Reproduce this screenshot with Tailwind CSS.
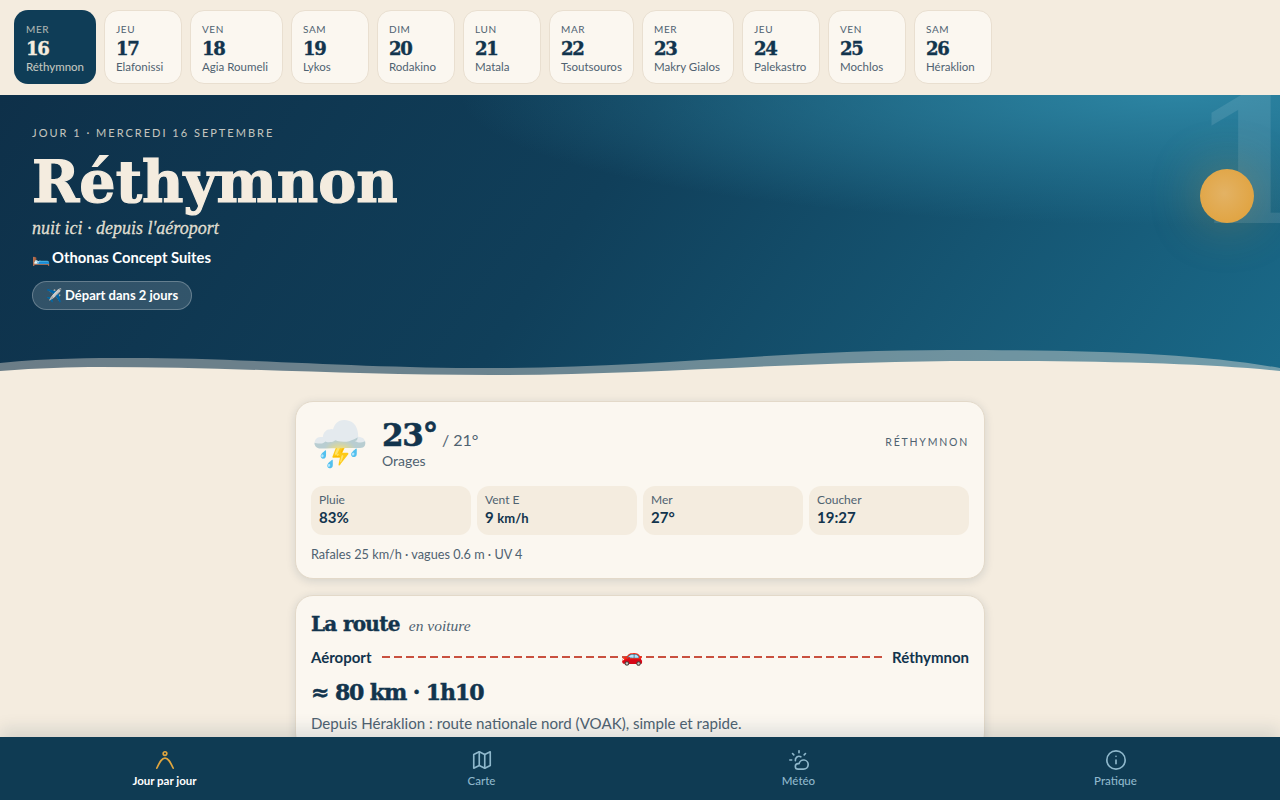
<!DOCTYPE html>
<html lang="fr">
<head>
  <meta charset="UTF-8" />
  <title>Crète | Jour par jour</title>
  <script src="https://cdn.jsdelivr.net/npm/@tailwindcss/browser@4"></script>
</head>
<body class="h-[800px] w-[1280px] overflow-hidden relative bg-[#f4ecdf] text-[#12344d] font-['Lato',sans-serif]">

  <!-- Day strip -->
  <nav class="h-[95px] px-[14px] pt-[10px] flex gap-2 items-start">
    <a class="w-[82px] h-[74px] rounded-[14px] bg-[#0f3d57] text-[#f4ecdf] pl-3 pt-[13px] flex flex-col">
      <span class="text-[10px] leading-[12px] tracking-[0.06em] opacity-70">MER</span>
      <span class="mt-[2px] font-['DejaVu_Serif',serif] font-bold text-[18px] tracking-[-0.07em] [-webkit-text-stroke:0.4px] leading-[24px]">16</span>
      <span class="mt-[-1px] text-[11.5px] leading-[14px] opacity-80">Réthymnon</span>
    </a>
    <a class="w-[78px] h-[74px] rounded-[14px] bg-[#fbf7f0] border border-[#e9dfd0] pl-[11px] pt-[12px] flex flex-col">
      <span class="text-[10px] leading-[12px] tracking-[0.06em] text-[#4f6270]">JEU</span>
      <span class="mt-[2px] font-['DejaVu_Serif',serif] font-bold text-[18px] tracking-[-0.07em] [-webkit-text-stroke:0.4px] leading-[24px]">17</span>
      <span class="mt-[-1px] text-[11.5px] leading-[14px] text-[#4f6270]">Elafonissi</span>
    </a>
    <a class="w-[93px] h-[74px] rounded-[14px] bg-[#fbf7f0] border border-[#e9dfd0] pl-[11px] pt-[12px] flex flex-col">
      <span class="text-[10px] leading-[12px] tracking-[0.06em] text-[#4f6270]">VEN</span>
      <span class="mt-[2px] font-['DejaVu_Serif',serif] font-bold text-[18px] tracking-[-0.07em] [-webkit-text-stroke:0.4px] leading-[24px]">18</span>
      <span class="mt-[-1px] text-[11.5px] leading-[14px] text-[#4f6270]">Agia Roumeli</span>
    </a>
    <a class="w-[78px] h-[74px] rounded-[14px] bg-[#fbf7f0] border border-[#e9dfd0] pl-[11px] pt-[12px] flex flex-col">
      <span class="text-[10px] leading-[12px] tracking-[0.06em] text-[#4f6270]">SAM</span>
      <span class="mt-[2px] font-['DejaVu_Serif',serif] font-bold text-[18px] tracking-[-0.07em] [-webkit-text-stroke:0.4px] leading-[24px]">19</span>
      <span class="mt-[-1px] text-[11.5px] leading-[14px] text-[#4f6270]">Lykos</span>
    </a>
    <a class="w-[78px] h-[74px] rounded-[14px] bg-[#fbf7f0] border border-[#e9dfd0] pl-[11px] pt-[12px] flex flex-col">
      <span class="text-[10px] leading-[12px] tracking-[0.06em] text-[#4f6270]">DIM</span>
      <span class="mt-[2px] font-['DejaVu_Serif',serif] font-bold text-[18px] tracking-[-0.07em] [-webkit-text-stroke:0.4px] leading-[24px]">20</span>
      <span class="mt-[-1px] text-[11.5px] leading-[14px] text-[#4f6270]">Rodakino</span>
    </a>
    <a class="w-[78px] h-[74px] rounded-[14px] bg-[#fbf7f0] border border-[#e9dfd0] pl-[11px] pt-[12px] flex flex-col">
      <span class="text-[10px] leading-[12px] tracking-[0.06em] text-[#4f6270]">LUN</span>
      <span class="mt-[2px] font-['DejaVu_Serif',serif] font-bold text-[18px] tracking-[-0.07em] [-webkit-text-stroke:0.4px] leading-[24px]">21</span>
      <span class="mt-[-1px] text-[11.5px] leading-[14px] text-[#4f6270]">Matala</span>
    </a>
    <a class="w-[85px] h-[74px] rounded-[14px] bg-[#fbf7f0] border border-[#e9dfd0] pl-[11px] pt-[12px] flex flex-col">
      <span class="text-[10px] leading-[12px] tracking-[0.06em] text-[#4f6270]">MAR</span>
      <span class="mt-[2px] font-['DejaVu_Serif',serif] font-bold text-[18px] tracking-[-0.07em] [-webkit-text-stroke:0.4px] leading-[24px]">22</span>
      <span class="mt-[-1px] text-[11.5px] leading-[14px] text-[#4f6270]">Tsoutsouros</span>
    </a>
    <a class="w-[92px] h-[74px] rounded-[14px] bg-[#fbf7f0] border border-[#e9dfd0] pl-[11px] pt-[12px] flex flex-col">
      <span class="text-[10px] leading-[12px] tracking-[0.06em] text-[#4f6270]">MER</span>
      <span class="mt-[2px] font-['DejaVu_Serif',serif] font-bold text-[18px] tracking-[-0.07em] [-webkit-text-stroke:0.4px] leading-[24px]">23</span>
      <span class="mt-[-1px] text-[11.5px] leading-[14px] text-[#4f6270]">Makry Gialos</span>
    </a>
    <a class="w-[78px] h-[74px] rounded-[14px] bg-[#fbf7f0] border border-[#e9dfd0] pl-[11px] pt-[12px] flex flex-col">
      <span class="text-[10px] leading-[12px] tracking-[0.06em] text-[#4f6270]">JEU</span>
      <span class="mt-[2px] font-['DejaVu_Serif',serif] font-bold text-[18px] tracking-[-0.07em] [-webkit-text-stroke:0.4px] leading-[24px]">24</span>
      <span class="mt-[-1px] text-[11.5px] leading-[14px] text-[#4f6270]">Palekastro</span>
    </a>
    <a class="w-[78px] h-[74px] rounded-[14px] bg-[#fbf7f0] border border-[#e9dfd0] pl-[11px] pt-[12px] flex flex-col">
      <span class="text-[10px] leading-[12px] tracking-[0.06em] text-[#4f6270]">VEN</span>
      <span class="mt-[2px] font-['DejaVu_Serif',serif] font-bold text-[18px] tracking-[-0.07em] [-webkit-text-stroke:0.4px] leading-[24px]">25</span>
      <span class="mt-[-1px] text-[11.5px] leading-[14px] text-[#4f6270]">Mochlos</span>
    </a>
    <a class="w-[78px] h-[74px] rounded-[14px] bg-[#fbf7f0] border border-[#e9dfd0] pl-[11px] pt-[12px] flex flex-col">
      <span class="text-[10px] leading-[12px] tracking-[0.06em] text-[#4f6270]">SAM</span>
      <span class="mt-[2px] font-['DejaVu_Serif',serif] font-bold text-[18px] tracking-[-0.07em] [-webkit-text-stroke:0.4px] leading-[24px]">26</span>
      <span class="mt-[-1px] text-[11.5px] leading-[14px] text-[#4f6270]">Héraklion</span>
    </a>
  </nav>

  <!-- Hero -->
  <header class="relative h-[291px] overflow-hidden px-8 pt-[30px] text-[#f4ecdf] bg-[radial-gradient(ellipse_720px_130px_at_1180px_0px,#2c84a2_0%,transparent_100%),linear-gradient(125deg,#0e3049_0%,#103f5a_45%,#1a6a89_100%)]">
    <span class="absolute right-[-32px] top-[-38px] font-['DejaVu_Serif',serif] font-bold text-[175px] leading-[210px] text-white/10">1</span>
    <div class="absolute left-[1200px] top-[74px] size-[54px] rounded-full bg-[radial-gradient(circle_at_45%_45%,#e3b264,#e09f36)] shadow-[0_0_50px_rgba(224,159,54,0.35)]"></div>

    <p class="text-[11px] leading-4 tracking-[2px] text-[#f4ecdf]/80">JOUR 1 · MERCREDI 16 SEPTEMBRE</p>
    <h1 class="mt-[6px] font-['DejaVu_Serif',serif] font-bold text-[57px] [-webkit-text-stroke:1.2px] leading-[70px]">Réthymnon</h1>
    <p class="mt-[-1px] font-['Liberation_Serif',serif] italic text-[18px] [-webkit-text-stroke:0.3px] leading-6 text-[#f4ecdf]/90">nuit ici · depuis l'aéroport</p>
    <p class="mt-[7px] text-[14.8px] leading-5 font-bold text-white flex"><span class="w-5">🛏️</span><span>Othonas Concept Suites</span></p>
    <span class="mt-[14px] inline-flex items-center h-[29px] w-[160px] justify-center rounded-full bg-white/15 border border-white/25 text-[13px] font-bold text-white">✈️ Départ dans 2 jours</span>

    <svg class="absolute left-0 bottom-0 w-[1280px] h-[40px]" viewBox="0 0 1280 40" preserveAspectRatio="none">
      <path d="M0 17 C50 12 90 12 130 12 C250 12 350 22 490 22 C650 22 780 4 950 4 C1100 4 1200 8 1280 22 L1280 40 L0 40 Z" fill="#f4ecdf" fill-opacity="0.4"/>
      <path d="M0 25 C40 22 70 21 100 21 C230 21 350 29 490 29 C650 29 800 15 980 15 C1120 15 1210 18 1280 25 L1280 40 L0 40 Z" fill="#f4ecdf"/>
    </svg>
  </header>

  <!-- Cards -->
  <main class="w-[690px] mx-auto pt-[15px] flex flex-col gap-4">
    <section class="h-[178px] rounded-[18px] bg-[#fbf7f0] border border-[#e3d9c9] shadow-[0_2px_10px_rgba(18,52,77,0.14)] px-[15px] pt-[13px]">
      <div class="flex items-center">
        <span class="w-[55px] text-[46px] leading-[56px]">⛈️</span>
        <div class="ml-4">
          <div class="flex items-baseline gap-[5px]">
            <span class="font-['DejaVu_Serif',serif] font-bold text-[31px] tracking-[-0.04em] [-webkit-text-stroke:0.6px] leading-9">23°</span>
            <span class="text-[16px] text-[#4f6270]">/ 21°</span>
          </div>
          <p class="text-[14px] leading-4 text-[#4f6270]">Orages</p>
        </div>
        <span class="ml-auto text-[10.5px] tracking-[0.17em] text-[#4f6270]">RÉTHYMNON</span>
      </div>
      <div class="mt-[15px] grid grid-cols-4 gap-[6px]">
        <div class="h-[49px] rounded-xl bg-[#f4ecdf] px-2 pt-[7px]">
          <p class="text-[12px] leading-[14px] text-[#4f6270]">Pluie</p>
          <p class="text-[15px] leading-[21px] font-bold">83%</p>
        </div>
        <div class="h-[49px] rounded-xl bg-[#f4ecdf] px-2 pt-[7px]">
          <p class="text-[12px] leading-[14px] text-[#4f6270]">Vent E</p>
          <p class="text-[15px] leading-[21px] font-bold">9 <span class="text-[13px]">km/h</span></p>
        </div>
        <div class="h-[49px] rounded-xl bg-[#f4ecdf] px-2 pt-[7px]">
          <p class="text-[12px] leading-[14px] text-[#4f6270]">Mer</p>
          <p class="text-[15px] leading-[21px] font-bold">27°</p>
        </div>
        <div class="h-[49px] rounded-xl bg-[#f4ecdf] px-2 pt-[7px]">
          <p class="text-[12px] leading-[14px] text-[#4f6270]">Coucher</p>
          <p class="text-[15px] leading-[21px] font-bold">19:27</p>
        </div>
      </div>
      <p class="mt-[11px] text-[12.7px] leading-4 text-[#4f6270]">Rafales 25 km/h · vagues 0.6 m · UV 4</p>
    </section>

    <section class="rounded-[18px] bg-[#fbf7f0] border border-[#e3d9c9] shadow-[0_2px_10px_rgba(18,52,77,0.14)] px-[15px] pt-[14px] pb-4">
      <div class="flex items-baseline gap-[9px]">
        <h2 class="font-['DejaVu_Serif',serif] font-bold text-[20px] tracking-[-0.035em] [-webkit-text-stroke:0.4px] leading-7">La route</h2>
        <span class="font-['Liberation_Serif',serif] italic text-[15.5px] text-[#4f6270]">en voiture</span>
      </div>
      <div class="mt-[8px] flex items-center gap-[10px] text-[15px] font-bold">
        <span>Aéroport</span>
        <div class="relative flex-1 h-[2px] bg-[repeating-linear-gradient(90deg,#c9503f_0_8px,transparent_8px_12px)]">
          <span class="absolute left-1/2 top-[-12px] -translate-x-1/2 text-[18px] leading-[22px]">🚗</span>
        </div>
        <span>Réthymnon</span>
      </div>
      <p class="mt-[7px] font-['DejaVu_Serif',serif] font-bold text-[22px] tracking-[-0.05em] [-webkit-text-stroke:0.5px] leading-8">≈ 80 km · 1h10</p>
      <p class="mt-[4px] text-[15.1px] leading-[22px] text-[#4f6270]">Depuis Héraklion : route nationale nord (VOAK), simple et rapide.</p>
    </section>
  </main>

  <!-- Bottom tabs -->
  <footer class="absolute inset-x-0 bottom-0 h-[63px] bg-[#0f3b53] px-[6px] grid grid-cols-4 shadow-[0_-8px_16px_rgba(18,52,77,0.12)]">
    <a class="flex flex-col items-center pt-[12px] text-white">
      <svg class="size-[22px]" viewBox="0 0 24 24" fill="none" stroke="#e0a63f" stroke-width="1.8" stroke-linecap="round"><circle cx="12" cy="5" r="2"/><path d="M3 21 C6 15 8 10 12 10 C16 10 18 15 21 21"/></svg>
      <span class="mt-[3px] text-[11.5px] leading-[14px] font-bold">Jour par jour</span>
    </a>
    <a class="flex flex-col items-center pt-[12px] text-[#8fb8cc]">
      <svg class="size-[22px]" viewBox="0 0 24 24" fill="none" stroke="currentColor" stroke-width="1.8" stroke-linecap="round" stroke-linejoin="round"><polygon points="3 6 9 3 15 6 21 3 21 18 15 21 9 18 3 21"/><line x1="9" x2="9" y1="3" y2="18"/><line x1="15" x2="15" y1="6" y2="21"/></svg>
      <span class="mt-[3px] text-[11.5px] leading-[14px] font-medium">Carte</span>
    </a>
    <a class="flex flex-col items-center pt-[12px] text-[#8fb8cc]">
      <svg class="size-[22px] -scale-x-100" viewBox="0 0 24 24" fill="none" stroke="currentColor" stroke-width="1.8" stroke-linecap="round" stroke-linejoin="round"><path d="M12 2v2"/><path d="m4.93 4.93 1.41 1.41"/><path d="M20 12h2"/><path d="m19.07 4.93-1.41 1.41"/><path d="M15.947 12.65a4 4 0 0 0-5.925-4.128"/><path d="M13 22H7a5 5 0 1 1 4.9-6H13a3 3 0 0 1 0 6Z"/></svg>
      <span class="mt-[3px] text-[11.5px] leading-[14px] font-medium">Météo</span>
    </a>
    <a class="flex flex-col items-center pt-[12px] text-[#8fb8cc]">
      <svg class="size-[22px]" viewBox="0 0 24 24" fill="none" stroke="currentColor" stroke-width="1.8" stroke-linecap="round" stroke-linejoin="round"><circle cx="12" cy="12" r="10"/><path d="M12 16v-4"/><path d="M12 8h.01"/></svg>
      <span class="mt-[3px] text-[11.5px] leading-[14px] font-medium">Pratique</span>
    </a>
  </footer>
</body>
</html>
